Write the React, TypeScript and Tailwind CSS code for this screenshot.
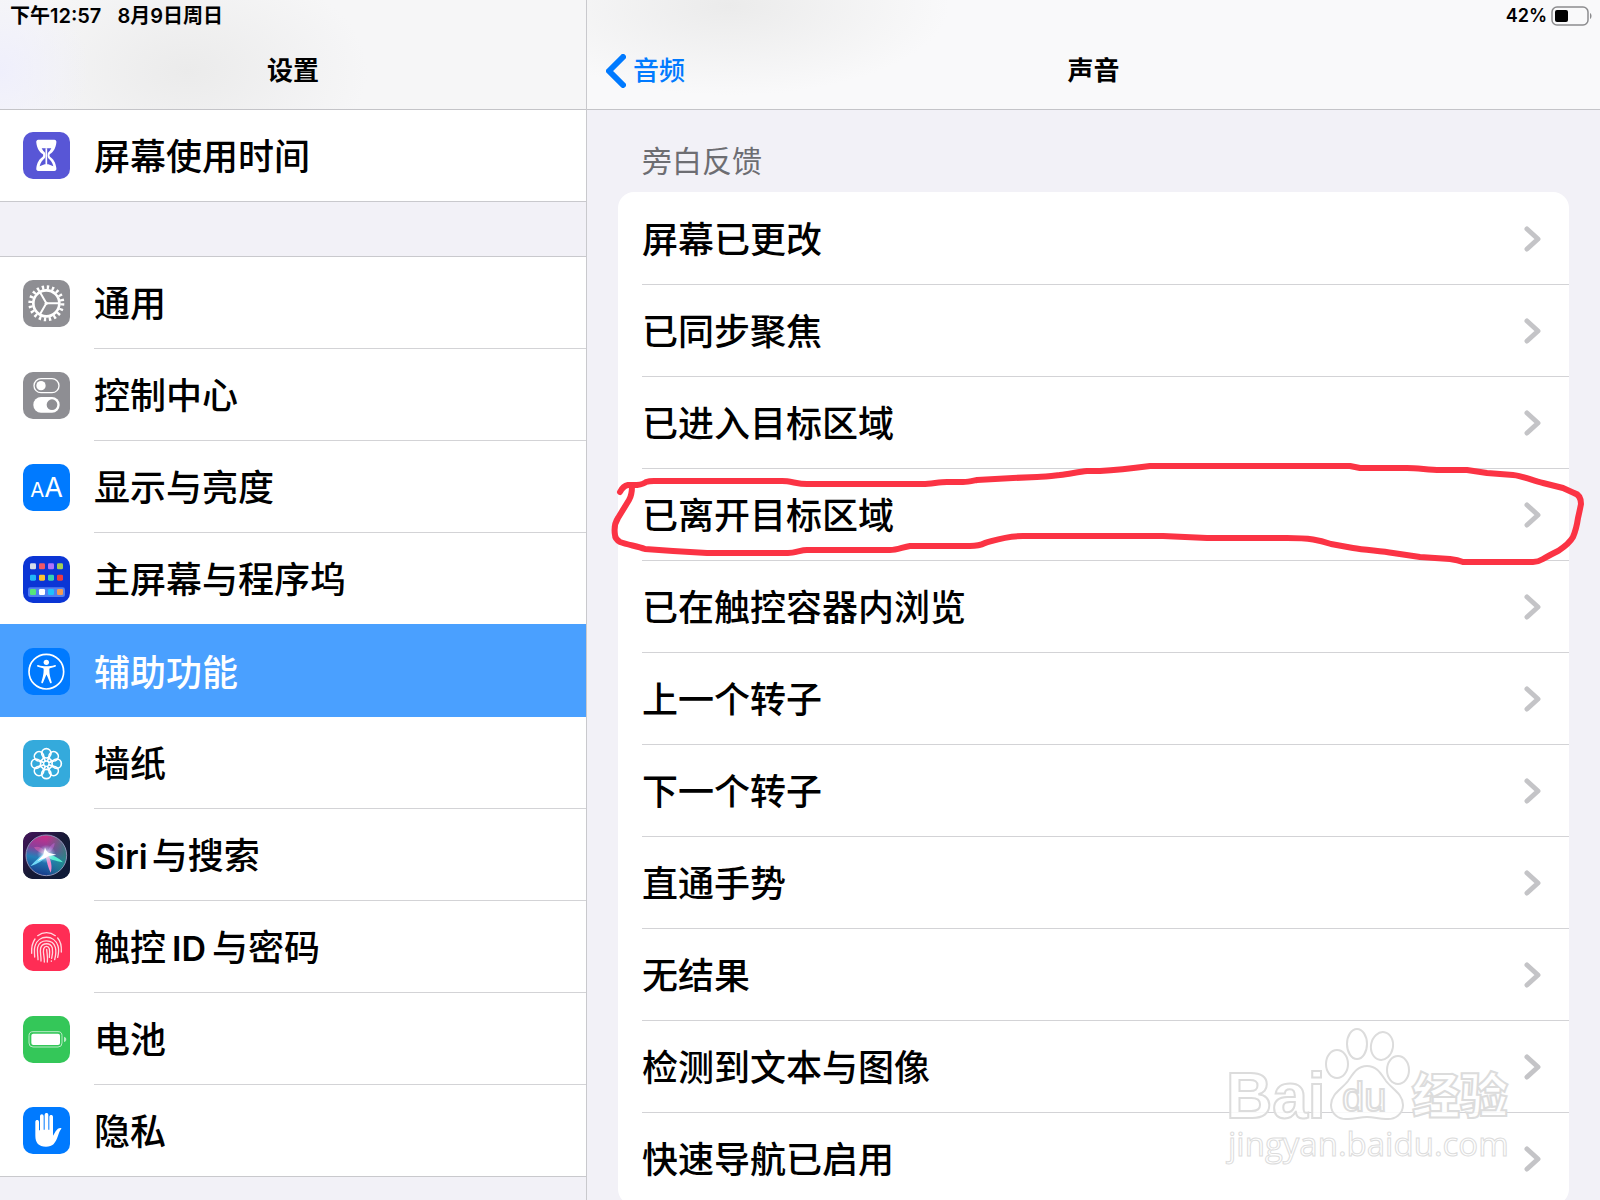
import { ReactNode } from 'react'

const settings = [
  { label: '通用', icon: <GeneralIcon /> },
  { label: '控制中心', icon: <ControlCenterIcon /> },
  { label: '显示与亮度', icon: <DisplayIcon /> },
  { label: '主屏幕与程序坞', icon: <HomeScreenIcon /> },
  { label: '辅助功能', icon: <AccessibilityIcon />, active: true },
  { label: '墙纸', icon: <WallpaperIcon /> },
  { label: <><Latin className="mr-1">Siri</Latin>与搜索</>, icon: <SiriIcon /> },
  { label: <>触控<Latin className="mx-1.5">ID</Latin>与密码</>, icon: <TouchIdIcon /> },
  { label: '电池', icon: <BatteryIcon /> },
  { label: '隐私', icon: <PrivacyIcon /> },
]

const sounds = [
  { label: '屏幕已更改' },
  { label: '已同步聚焦' },
  { label: '已进入目标区域' },
  { label: '已离开目标区域', circled: true },
  { label: '已在触控容器内浏览' },
  { label: '上一个转子' },
  { label: '下一个转子' },
  { label: '直通手势' },
  { label: '无结果' },
  { label: '检测到文本与图像' },
  { label: '快速导航已启用' },
]

/* Latin words inside Chinese labels are slightly smaller and get a little air */
function Latin({ className, children }: { className: string; children: ReactNode }) {
  return <span className={`text-[34px] font-semibold ${className}`}>{children}</span>
}

/* App icons, all on a 141 unit grid */

function AppIcon({ className, children }: { className: string; children: ReactNode }) {
  return (
    <svg viewBox="0 0 141 141" aria-hidden="true" className={`size-[47px] shrink-0 rounded-[10px] ${className}`}>
      {children}
    </svg>
  )
}

function ScreenTimeIcon() {
  return (
    <AppIcon className="bg-[#5856d6]">
      <path
        d="M46 23h48c5 0 7 4 6 9-2 17-9 27-19 34-2 2-2 6 0 8 10 7 17 17 19 34 1 5-1 9-6 9H46c-5 0-7-4-6-9 2-17 9-27 19-34 2-2 2-6 0-8C49 59 42 49 40 32c-1-5 1-9 6-9z"
        fill="#fff"
      />
      <path d="M56 49h29c-3 6-6 9-9 12-3 4-3 14 0 18 6 6 13 13 15 24-5-2-10-4-15-6h-11c-5 2-10 4-15 6 2-11 9-18 15-24 3-4 3-14 0-18-3-3-6-6-9-12z" fill="#5856d6" />
      <path d="M70 49v50" stroke="#fff" strokeWidth="5" />
    </AppIcon>
  )
}

function GeneralIcon() {
  return (
    <AppIcon className="bg-[#8e8e93]">
      <g fill="none" stroke="#fff">
        <circle cx="70" cy="70" r="48" strokeWidth="12" strokeDasharray="7 8.08" />
        <circle cx="70" cy="70" r="39" strokeWidth="8" />
        <path d="M70 70h38M70 70 51 37M70 70l-19 33" strokeWidth="6" />
      </g>
      <circle cx="70" cy="70" r="5" fill="#fff" />
    </AppIcon>
  )
}

function ControlCenterIcon() {
  return (
    <AppIcon className="bg-[#8e8e93]">
      <rect x="33" y="20" width="75" height="42" rx="21" fill="none" stroke="#fff" strokeWidth="4" />
      <circle cx="54" cy="41" r="14" fill="#fff" />
      <rect x="31" y="75" width="79" height="47" rx="23" fill="#fff" />
      <circle cx="87" cy="98" r="16" fill="#8e8e93" />
    </AppIcon>
  )
}

function DisplayIcon() {
  return (
    <AppIcon className="bg-[#007aff] font-normal">
      <text x="22" y="100" fontSize="61" fill="#fff">A</text>
      <text x="64" y="100" fontSize="81" fill="#fff">A</text>
    </AppIcon>
  )
}

const homeApps = [
  ['#d5dcea', '#f25767', '#b073fb', '#a3cf54'],
  ['#20b5f9', '#fbc52f', '#35d2b3', '#ee3a42'],
  ['#56e57b', '#ffffff', '#1fc1fc', '#f39a52'],
]

function HomeScreenIcon() {
  return (
    <AppIcon className="bg-[#0b35d5]">
      <rect x="15" y="94" width="111" height="29" rx="7" fill="#4f7ff0" />
      {homeApps.map((row, r) =>
        row.map((color, c) => (
          <rect key={`${r}${c}`} x={21 + c * 27} y={[22, 56, 99][r]} width="18" height="18" rx="4" fill={color} />
        )),
      )}
    </AppIcon>
  )
}

function AccessibilityIcon() {
  return (
    <AppIcon className="bg-[#007aff]">
      <circle cx="70" cy="71" r="52" fill="none" stroke="#fff" strokeWidth="5" />
      <circle cx="70" cy="43" r="8" fill="#fff" />
      <path
        d="M45 51c9 3 17 4 25 4s17-1 26-4c3-1 4 4 1 5l-16 5c-2 1-2 2-2 4 0 14 3 24 7 37 1 4-4 5-5 2L71 80h-1l-10 24c-1 3-6 2-5-2 4-13 7-23 7-37 0-2 0-3-2-4l-16-5c-3-1-2-6 1-5z"
        fill="#fff"
      />
    </AppIcon>
  )
}

function WallpaperIcon() {
  return (
    <AppIcon className="bg-[#34aadc]">
      <g fill="none" stroke="#fff" strokeWidth="5">
        {[0, 45, 90, 135, 180, 225, 270, 315].map((angle) => (
          <g key={angle} transform={`rotate(${angle} 70 71)`}>
            <circle cx="70" cy="40" r="14" />
            <path d="M60 50l7 13M80 50l-7 13" strokeWidth="4" />
          </g>
        ))}
        <circle cx="70" cy="71" r="8" strokeWidth="4" />
      </g>
    </AppIcon>
  )
}

function SiriIcon() {
  return (
    <AppIcon className="bg-[#171a35]">
      <defs>
        <linearGradient id="siri-orb" x1="0.6" y1="0" x2="0.4" y2="1">
          <stop offset="0" stopColor="#d32c86" />
          <stop offset="0.35" stopColor="#8b3f9b" />
          <stop offset="0.6" stopColor="#2380b8" />
          <stop offset="1" stopColor="#173a8a" />
        </linearGradient>
        <linearGradient id="siri-side" x1="0" x2="1">
          <stop offset="0.5" stopColor="#25808c" stopOpacity="0" />
          <stop offset="1" stopColor="#1f8c78" stopOpacity="0.8" />
        </linearGradient>
        <linearGradient id="siri-corner" x1="0" y1="0" x2="1" y2="1">
          <stop offset="0" stopColor="#46145c" />
          <stop offset="0.5" stopColor="#171a35" />
          <stop offset="1" stopColor="#0c1a38" />
        </linearGradient>
        <radialGradient id="siri-glow">
          <stop offset="0" stopColor="#fff" />
          <stop offset="0.4" stopColor="#d9f2ff" stopOpacity="0.6" />
          <stop offset="1" stopColor="#9bd8ff" stopOpacity="0" />
        </radialGradient>
      </defs>
      <rect width="141" height="141" fill="url(#siri-corner)" />
      <circle cx="70" cy="70" r="61" fill="url(#siri-orb)" />
      <circle cx="70" cy="70" r="61" fill="url(#siri-side)" stroke="#8d93b8" strokeWidth="3" />
      <path d="M33 46c14-6 30 3 40 22-18-3-33-10-40-22z" fill="#e868b4" opacity="0.5" />
      <path d="M73 64c3-14 11-28 22-31-1 14-9 25-22 31z" fill="#b965cf" opacity="0.6" />
      <path d="M71 58c-14 12-32 25-49 45 22-8 40-18 52-31z" fill="#6fd9f6" />
      <path d="M70 60c17 11 36 15 50 31-22-4-42-9-52-18z" fill="#55efd0" />
      <path d="M67 70c5 20 8 38 16 52 6-17 1-36-7-52z" fill="#f58acb" />
      <circle cx="70" cy="66" r="28" fill="url(#siri-glow)" />
      <path d="M66 46c2 8 5 12 10 16l24 6-23 4-10 6-24 9 18-18z" fill="#fff" />
    </AppIcon>
  )
}

function TouchIdIcon() {
  return (
    <AppIcon className="bg-[#ff2d55]">
      <g fill="none" stroke="#ffd9e0" strokeWidth="4" strokeLinecap="round">
        <path d="M44 35c16-12 37-12 53 0" />
        <path d="M26 88c-1-17 2-32 10-43" />
        <path d="M104 42c9 10 12 23 11 42" />
        <path d="M35 99c0-11-3-22 1-33 10-35 59-35 69 0 3 10 2 22-1 34" />
        <path d="M45 107c0-14-4-25-1-37 7-26 46-26 53 0 3 11 1 25-2 37" />
        <path d="M54 111c1-15-4-27-1-39 5-17 30-17 35 0 2 12 0 24-2 31" />
        <path d="M64 114c1-14-5-28-2-40 3-9 14-9 17 0 2 10 1 18 0 26" />
        <path d="M71 76c1 13 4 24 2 38M85 111v1" />
      </g>
    </AppIcon>
  )
}

function BatteryIcon() {
  return (
    <AppIcon className="bg-[#34c759]">
      <rect x="18" y="47" width="99" height="46" rx="12" fill="none" stroke="#b9ecc6" strokeWidth="3" />
      <rect x="25" y="53" width="86" height="34" rx="6" fill="#fff" />
      <path d="M123 62c9 2 9 14 0 16z" fill="#b9ecc6" />
    </AppIcon>
  )
}

function PrivacyIcon() {
  return (
    <AppIcon className="bg-[#007aff]">
      <path
        d="M37 45c0-8 11-8 11 0v25h3V28c0-8 11-8 11 0v40h3V24c0-8 11-8 11 0v44h3V30c0-8 11-8 11 0v56l8-13c5-8 10-11 16-10 2 1 1 3 0 4-4 4-6 11-9 19-8 23-16 33-36 33-22 0-32-12-32-33z"
        fill="#fff"
      />
    </AppIcon>
  )
}

function Chevron() {
  return (
    <svg viewBox="0 0 17 26" aria-hidden="true" className="h-[26px] w-[17px] shrink-0">
      <path d="M3 3l11 10L3 23" fill="none" stroke="#c4c4c7" strokeWidth="5" strokeLinecap="round" strokeLinejoin="round" />
    </svg>
  )
}

/* Hand drawn marker around a row */
function MarkerCircle() {
  return (
    <svg
      viewBox="0 0 975 92"
      preserveAspectRatio="none"
      aria-hidden="true"
      className="pointer-events-none absolute top-0 -left-2 z-10 h-[92px] w-[calc(100%+24px)] overflow-visible"
    >
      <path
        d="M10 23Q13 17 18 16L27 16Q34 15 36 13Q39 12 44 12H172C181 12 187 15 197 15H313C321 15 329 13 337 13H353C358 13 362 12 367 11L403 9L427 8C435 8 442 7 450 6C459 5 468 3 477 2L490 2C510 1 525-1 540-3H740L750-1H797C808-1 819 1 830 1H857L877 4L903 6C914 7 923 12 933 14L953 19L964 24Q971 26 971 35C970 40 969 45 968 49C967 56 966 61 963 68C959 75 954 78 948 82C942 85 938 87 933 90Q928 93 923 93H853Q848 91 840 90L810 88L783 84C770 82 755 81 743 79L721 75C709 71 700 69 677 69H597L553 67H413C395 67 386 71 375 74Q369 77 360 77H300C293 78 287 81 280 81H197C191 81 185 84 178 84H97L63 82L35 80C27 77 18 76 10 73Q5 70 5 66C4 60 4 55 8 49L19 31Q22 26 22 17"
        fill="none"
        stroke="#fb3344"
        strokeWidth="6"
        strokeLinecap="round"
        strokeLinejoin="round"
        vectorEffect="non-scaling-stroke"
      />
    </svg>
  )
}

function Watermark() {
  return (
    <svg
      viewBox="0 0 300 145"
      role="img"
      aria-label="Baidu经验"
      className="pointer-events-none absolute right-[80px] bottom-[30px] z-10 h-[145px] w-[300px]"
    >
      <g fill="#fff" fillOpacity="0.85" stroke="#dcdcdc" strokeWidth="2">
        <text x="6" y="93" fontSize="64" className="font-['Liberation_Sans',sans-serif] font-bold">Bai</text>
        <text x="192" y="88" fontSize="48" className="font-['Noto_Sans_CJK_SC',sans-serif] font-black">经验</text>
        <ellipse cx="117" cy="39" rx="11" ry="14" />
        <ellipse cx="137" cy="19" rx="10" ry="15" />
        <ellipse cx="162" cy="21" rx="11" ry="14" transform="rotate(10 162 21)" />
        <ellipse cx="178" cy="45" rx="11" ry="14" />
        <path d="M147 41c10 0 14 8 19 15 6 8 17 13 17 24 0 9-8 15-17 14-7 0-12-2-19-2s-12 2-19 2c-9 1-17-5-17-14 0-11 11-16 17-24 5-7 9-15 19-15z" />
        <text x="122" y="86" fontSize="40" className="font-['Liberation_Sans',sans-serif] font-normal">du</text>
        <text x="8" y="131" fontSize="33" strokeWidth="1" className="font-['Open_Sans',sans-serif] font-medium">jingyan.baidu.com</text>
      </g>
    </svg>
  )
}

function SettingsRow({ label, icon, active, last }: { label: ReactNode; icon: ReactNode; active?: boolean; last?: boolean }) {
  return (
    <li className={active ? 'relative -mt-px bg-[#4aa0ff] pt-px text-white' : last ? 'border-b border-[#c9c9cd]' : ''}>
      <button type="button" className={`flex w-full items-center gap-6 pl-[23px] text-left ${last ? 'h-[91px]' : 'h-[92px]'}`}>
        {icon}
        <span className={`flex h-full flex-1 items-center pt-[3px] ${active || last ? '' : 'border-b border-[#d3d3d6]'}`}>
          <span>{label}</span>
        </span>
      </button>
    </li>
  )
}

export default function App() {
  return (
    <div className="flex h-screen overflow-hidden bg-[#f2f1f7] font-['Inter','Noto_Sans_CJK_SC',sans-serif] text-black">
      {/* Sidebar */}
      <aside className="flex w-[587px] shrink-0 flex-col border-r border-[#c9c9cd]">
        <header className="h-[110px] shrink-0 border-b border-[#c4c4c8] bg-[radial-gradient(90px_90px_at_0%_65%,#efeffc_0%,transparent_100%),radial-gradient(180px_110px_at_32%_65%,#ebebeb_0%,#f6f6f7_100%)]">
          <div className="flex h-8 items-center gap-4 px-[10px] text-xl font-semibold">
            <span>下午12:57</span>
            <span>8月9日周日</span>
          </div>
          <h1 className="flex h-[77px] items-center justify-center text-[26px] font-semibold">设置</h1>
        </header>
        <nav className="min-h-0 flex-1 overflow-y-auto text-[36px] font-medium [scrollbar-width:none]">
          <ul className="bg-white">
            <SettingsRow label="屏幕使用时间" icon={<ScreenTimeIcon />} last />
          </ul>
          <ul className="mt-[54px] border-t border-[#c9c9cd] bg-white">
            {settings.map((item, i) => (
              <SettingsRow key={i} {...item} last={i === settings.length - 1} />
            ))}
          </ul>
        </nav>
      </aside>

      {/* Detail */}
      <main className="relative flex min-w-0 flex-1 flex-col">
        <header className="h-[110px] shrink-0 border-b border-[#c4c4c8] bg-[radial-gradient(220px_90px_at_14%_5%,#ebebeb_0%,#f9f9fa_100%)]">
          <div className="flex h-8 items-center justify-end gap-1 px-2 text-lg font-semibold">
            <span>42%</span>
            <svg viewBox="0 0 41 20" aria-label="电量" className="h-5 w-[41px]">
              <rect x="1" y="1" width="36" height="18" rx="5" fill="none" stroke="#8c8c8e" strokeWidth="1.500" />
              <rect x="4" y="4" width="13" height="12" rx="2" />
              <path d="M39 7c2 1 2 5 0 6z" fill="#8c8c8e" />
            </svg>
          </div>
          <div className="grid h-[77px] grid-cols-[1fr_auto_1fr] items-center text-[26px]">
            <button type="button" className="flex items-center gap-[7px] justify-self-start pl-[19px] font-medium text-[#007aff]">
              <svg viewBox="0 0 20 34" aria-hidden="true" className="h-[34px] w-5">
                <path d="M17 3L3 17l14 14" fill="none" stroke="currentColor" strokeWidth="6" strokeLinecap="round" strokeLinejoin="round" />
              </svg>
              音频
            </button>
            <h2 className="font-semibold">声音</h2>
          </div>
        </header>
        <section className="min-h-0 flex-1 overflow-y-auto px-[31px] [scrollbar-width:none]">
          <h3 className="flex h-[82px] items-end pb-[11px] pl-6 text-[30px] leading-10 text-[#6d6d72]">旁白反馈</h3>
          <ul className="rounded-2xl bg-white pt-px pl-6 text-[36px] font-medium">
            {sounds.map((item) => (
              <li key={item.label} className="h-[92px] border-b border-[#d3d3d6]">
                <div className="relative -ml-6 h-full pl-6">
                  <button type="button" className="flex h-full w-full items-center justify-between pr-7 text-left">
                    <span className="pt-[3px]">{item.label}</span>
                    <Chevron />
                  </button>
                  {item.circled && <MarkerCircle />}
                </div>
              </li>
            ))}
          </ul>
        </section>
        <Watermark />
      </main>
    </div>
  )
}
